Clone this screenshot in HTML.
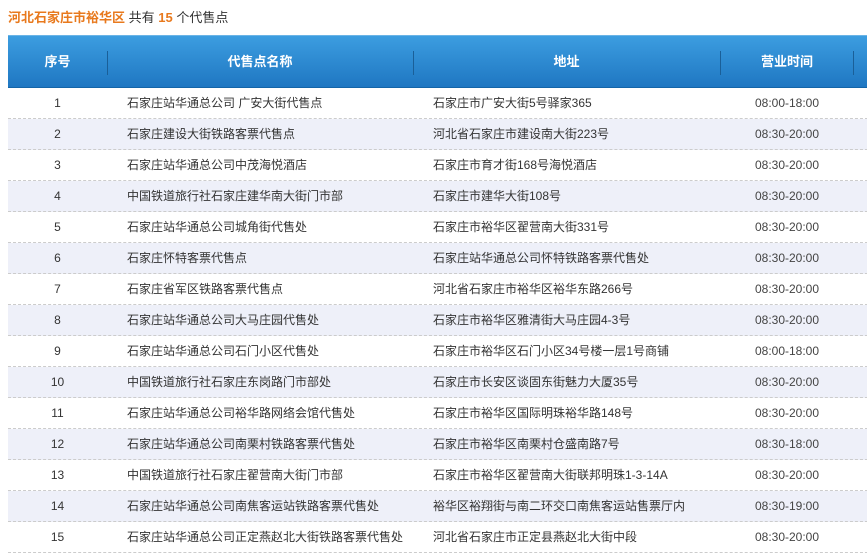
<!DOCTYPE html>
<html><head><meta charset="utf-8"><style>
body{margin:0;background:#fff;font-family:"Liberation Sans","Noto Sans CJK SC",sans-serif;font-size:12px;color:#333;width:867px;height:552px;overflow:hidden;position:relative}
.t{position:absolute;left:8px;top:7px;font-size:13px;color:#333}
.t b{color:#e8791d}
.h{position:absolute;left:8px;top:35px;width:870px;height:53px;background:linear-gradient(#3c9de0,#1f77c2);border-top:1px solid #6ab4e6;border-bottom:1px solid #1465a8;box-sizing:border-box}
.h .c{position:absolute;top:0;height:52px;line-height:52px;text-align:center;color:#fff;font-weight:bold;font-size:13px}
.h .sep{position:absolute;top:15px;width:1px;height:24px;background:#1a5f98}
.r{position:absolute;left:8px;width:870px;height:31px;line-height:30px;border-bottom:1px dashed #ccc;box-sizing:border-box}
.r.a{background:#eef0f9}
.r span{position:absolute;top:0;white-space:nowrap}
.n{left:0;width:99px;text-align:center}
.m{left:119px}.d{left:425px}.x{left:712px;width:134px;text-align:center;color:#444}
</style></head><body>
<div class="t"><b>河北石家庄市裕华区</b> 共有 <b>15</b> 个代售点</div>
<div class="h">
<div class="c" style="left:0;width:99px">序号</div><div class="sep" style="left:99px"></div>
<div class="c" style="left:99px;width:306px">代售点名称</div><div class="sep" style="left:405px"></div>
<div class="c" style="left:405px;width:307px">地址</div><div class="sep" style="left:712px"></div>
<div class="c" style="left:712px;width:134px">营业时间</div><div class="sep" style="left:845px"></div>
</div>
<div class="r" style="top:88px"><span class="n">1</span><span class="m">石家庄站华通总公司 广安大街代售点</span><span class="d">石家庄市广安大街5号驿家365</span><span class="x">08:00-18:00</span></div>
<div class="r a" style="top:119px"><span class="n">2</span><span class="m">石家庄建设大街铁路客票代售点</span><span class="d">河北省石家庄市建设南大街223号</span><span class="x">08:30-20:00</span></div>
<div class="r" style="top:150px"><span class="n">3</span><span class="m">石家庄站华通总公司中茂海悦酒店</span><span class="d">石家庄市育才街168号海悦酒店</span><span class="x">08:30-20:00</span></div>
<div class="r a" style="top:181px"><span class="n">4</span><span class="m">中国铁道旅行社石家庄建华南大街门市部</span><span class="d">石家庄市建华大街108号</span><span class="x">08:30-20:00</span></div>
<div class="r" style="top:212px"><span class="n">5</span><span class="m">石家庄站华通总公司城角街代售处</span><span class="d">石家庄市裕华区翟营南大街331号</span><span class="x">08:30-20:00</span></div>
<div class="r a" style="top:243px"><span class="n">6</span><span class="m">石家庄怀特客票代售点</span><span class="d">石家庄站华通总公司怀特铁路客票代售处</span><span class="x">08:30-20:00</span></div>
<div class="r" style="top:274px"><span class="n">7</span><span class="m">石家庄省军区铁路客票代售点</span><span class="d">河北省石家庄市裕华区裕华东路266号</span><span class="x">08:30-20:00</span></div>
<div class="r a" style="top:305px"><span class="n">8</span><span class="m">石家庄站华通总公司大马庄园代售处</span><span class="d">石家庄市裕华区雅清街大马庄园4-3号</span><span class="x">08:30-20:00</span></div>
<div class="r" style="top:336px"><span class="n">9</span><span class="m">石家庄站华通总公司石门小区代售处</span><span class="d">石家庄市裕华区石门小区34号楼一层1号商铺</span><span class="x">08:00-18:00</span></div>
<div class="r a" style="top:367px"><span class="n">10</span><span class="m">中国铁道旅行社石家庄东岗路门市部处</span><span class="d">石家庄市长安区谈固东街魅力大厦35号</span><span class="x">08:30-20:00</span></div>
<div class="r" style="top:398px"><span class="n">11</span><span class="m">石家庄站华通总公司裕华路网络会馆代售处</span><span class="d">石家庄市裕华区国际明珠裕华路148号</span><span class="x">08:30-20:00</span></div>
<div class="r a" style="top:429px"><span class="n">12</span><span class="m">石家庄站华通总公司南栗村铁路客票代售处</span><span class="d">石家庄市裕华区南栗村仓盛南路7号</span><span class="x">08:30-18:00</span></div>
<div class="r" style="top:460px"><span class="n">13</span><span class="m">中国铁道旅行社石家庄翟营南大街门市部</span><span class="d">石家庄市裕华区翟营南大街联邦明珠1-3-14A</span><span class="x">08:30-20:00</span></div>
<div class="r a" style="top:491px"><span class="n">14</span><span class="m">石家庄站华通总公司南焦客运站铁路客票代售处</span><span class="d">裕华区裕翔街与南二环交口南焦客运站售票厅内</span><span class="x">08:30-19:00</span></div>
<div class="r" style="top:522px"><span class="n">15</span><span class="m">石家庄站华通总公司正定燕赵北大街铁路客票代售处</span><span class="d">河北省石家庄市正定县燕赵北大街中段</span><span class="x">08:30-20:00</span></div>
</body></html>
